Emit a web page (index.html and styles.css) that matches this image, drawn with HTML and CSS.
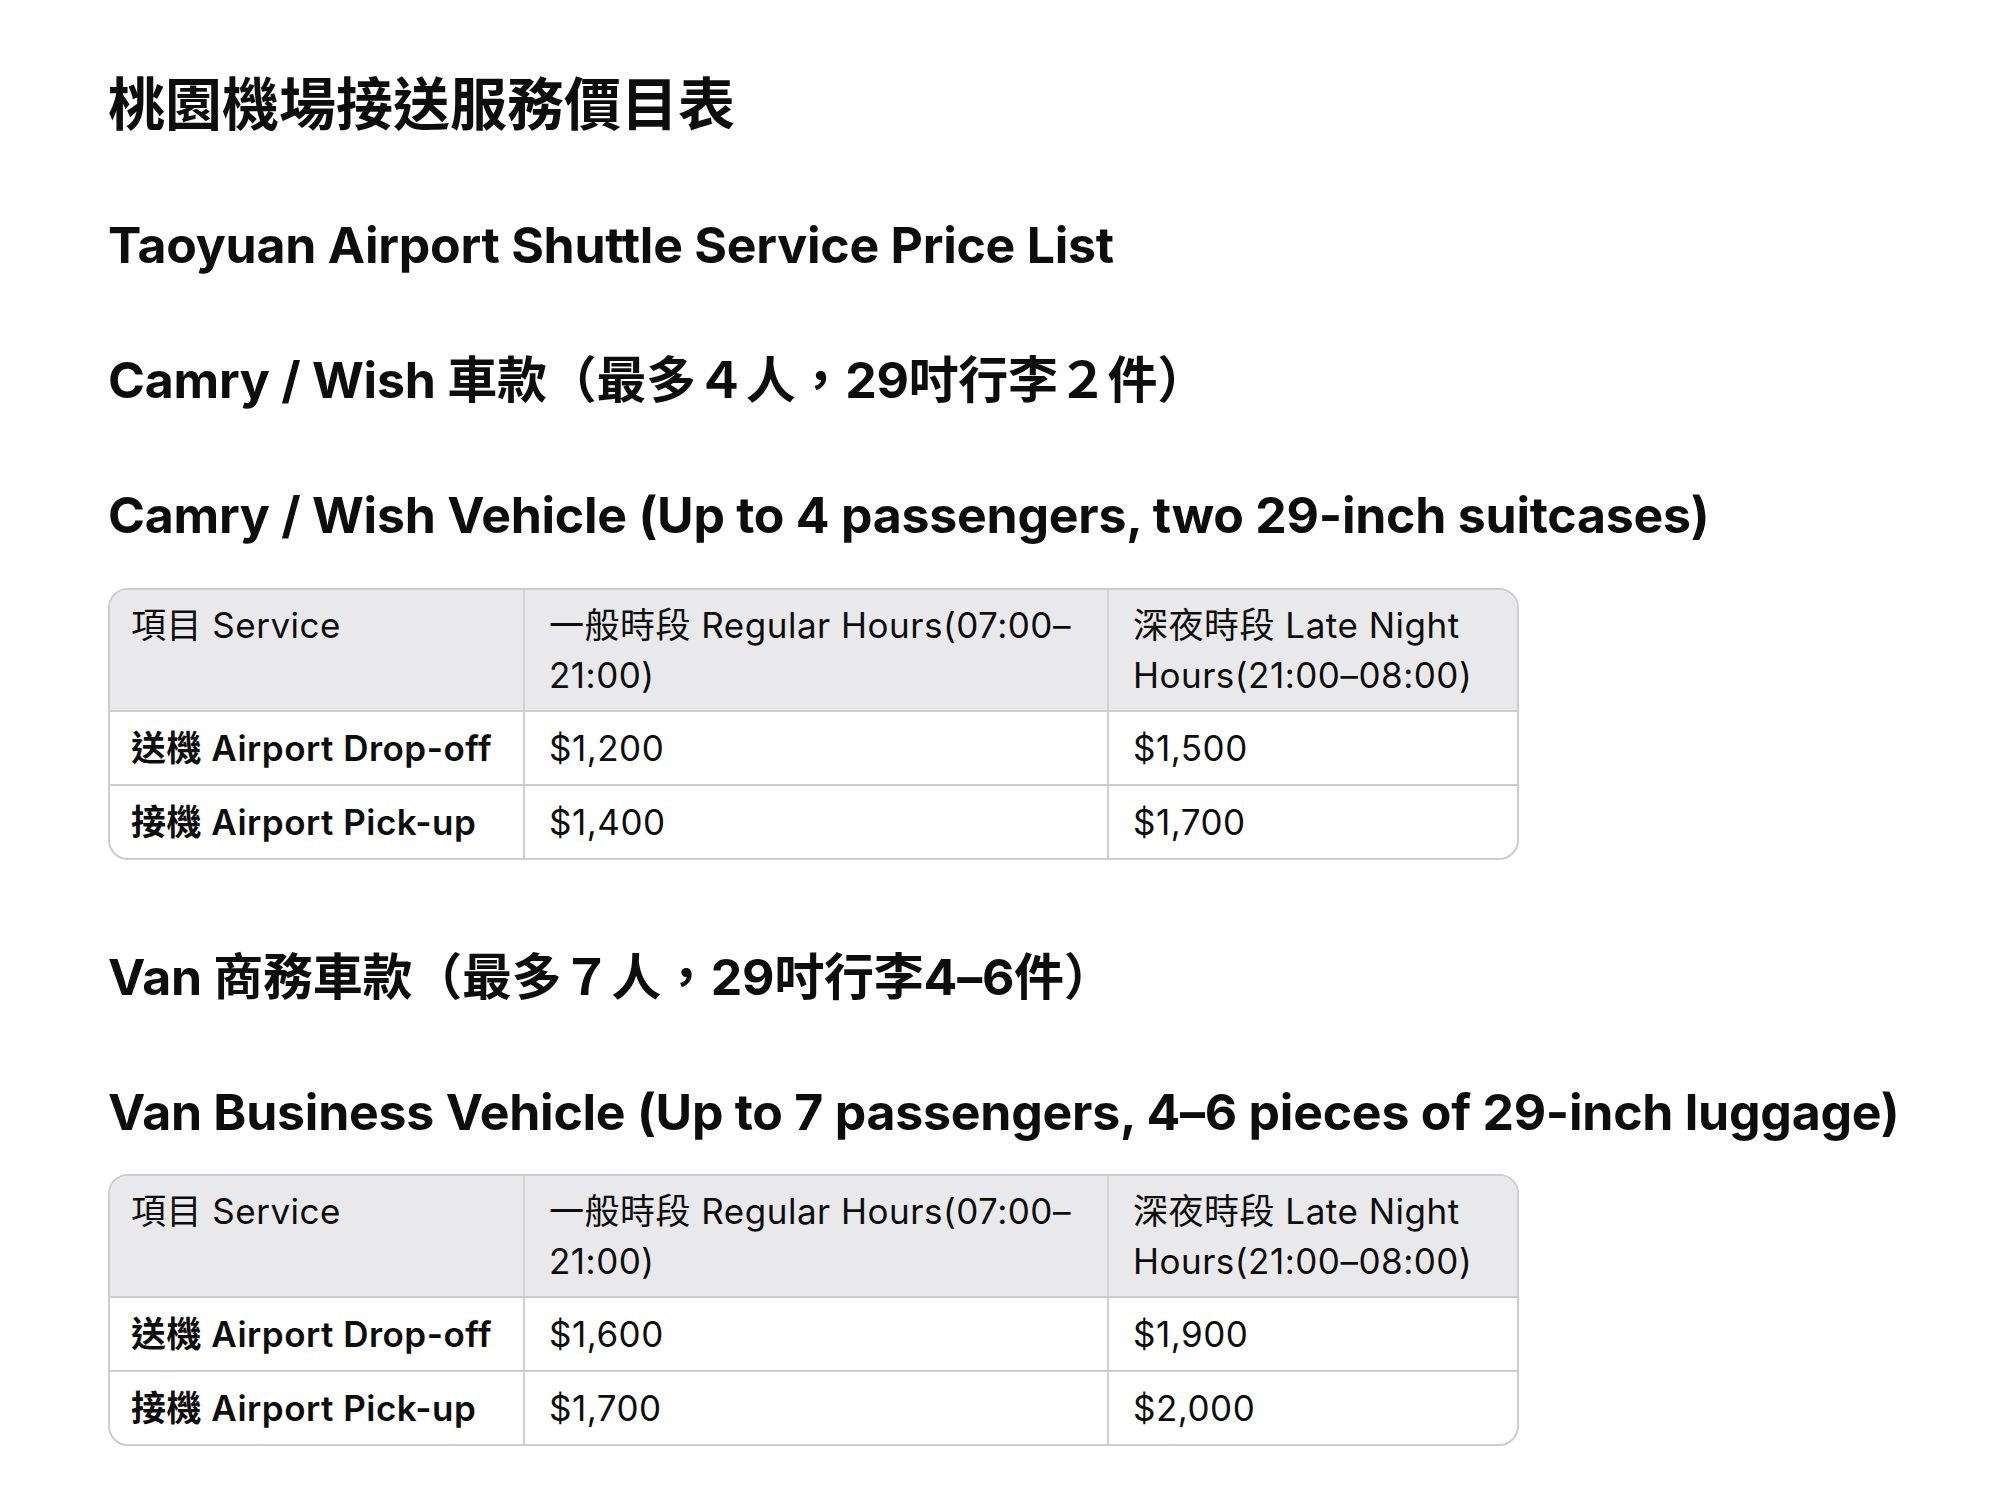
FILE: index.html
```html
<!DOCTYPE html>
<html lang="zh-Hant">
<head>
<meta charset="utf-8">
<title>桃園機場接送服務價目表</title>
<link rel="stylesheet" href="styles.css">
</head>
<body>
<main class="doc">
  <h1 class="doc-title">桃園機場接送服務價目表</h1>
  <h2 class="doc-subtitle">Taoyuan Airport Shuttle Service Price List</h2>

  <section class="vehicle vehicle--first">
    <h3 class="vehicle-title">Camry / Wish 車款（最多４人，29吋行李２件）</h3>
    <h3 class="vehicle-title">Camry / Wish Vehicle (Up to 4 passengers, two 29-inch suitcases)</h3>
    <div class="table-wrap">
      <table class="price-table">
        <colgroup><col class="col-service"><col class="col-regular"><col class="col-night"></colgroup>
        <thead>
          <tr><th>項目 Service</th><th>一般時段 Regular Hours(07:00–<br>21:00)</th><th>深夜時段 Late Night<br>Hours(21:00–08:00)</th></tr>
        </thead>
        <tbody>
          <tr><td class="label">送機 Airport Drop-off</td><td>$1,200</td><td>$1,500</td></tr>
          <tr><td class="label">接機 Airport Pick-up</td><td>$1,400</td><td>$1,700</td></tr>
        </tbody>
      </table>
    </div>
  </section>

  <section class="vehicle vehicle--second">
    <h3 class="vehicle-title">Van 商務車款（最多７人，29吋行李4–6件）</h3>
    <h3 class="vehicle-title">Van Business Vehicle (Up to 7 passengers, 4–6 pieces of 29-inch luggage)</h3>
    <div class="table-wrap">
      <table class="price-table">
        <colgroup><col class="col-service"><col class="col-regular"><col class="col-night"></colgroup>
        <thead>
          <tr><th>項目 Service</th><th>一般時段 Regular Hours(07:00–<br>21:00)</th><th>深夜時段 Late Night<br>Hours(21:00–08:00)</th></tr>
        </thead>
        <tbody>
          <tr><td class="label">送機 Airport Drop-off</td><td>$1,600</td><td>$1,900</td></tr>
          <tr><td class="label">接機 Airport Pick-up</td><td>$1,700</td><td>$2,000</td></tr>
        </tbody>
      </table>
    </div>
  </section>
</main>
</body>
</html>
```

FILE: styles.css
```css
html, body {
  margin: 0;
  padding: 0;
  background: #ffffff;
}

body {
  color: #0d0d0d;
  font-family: Inter, "Noto Sans CJK TC", sans-serif;
}

.doc {
  padding: 71px 0 40px 108px;
}

.doc-title {
  margin: 0;
  font-size: 57px;
  line-height: 68px;
  font-weight: 700;
}

.doc-subtitle,
.vehicle-title {
  margin: 0;
  font-size: 50px;
  line-height: 60px;
  font-weight: 700;
  letter-spacing: -0.25px;
}

.doc-subtitle {
  margin-top: 76px;
}

.vehicle-title {
  margin-top: 75px;
}

.vehicle--second .vehicle-title:first-child {
  margin-top: 87px;
}

.table-wrap {
  width: 1407px;
  margin-top: 43px;
  border: 2px solid #cdcdcd;
  border-radius: 20px;
  overflow: hidden;
}

.vehicle--second .table-wrap {
  margin-top: 32px;
}

.price-table {
  width: 100%;
  border-collapse: collapse;
  table-layout: fixed;
  font-size: 35px;
  line-height: 50px;
  letter-spacing: 0.5px;
}

.col-service { width: 414px; }
.col-regular { width: 584px; }
.col-night { width: auto; }

.price-table th,
.price-table td {
  padding: 11px 24px;
  text-align: left;
  vertical-align: top;
  border-right: 2px solid #d2d2d2;
  border-bottom: 2px solid #cdcdcd;
  white-space: nowrap;
}

.price-table th:first-child,
.price-table td:first-child {
  padding-left: 21px;
}

.price-table th {
  padding-top: 10px;
  padding-bottom: 10px;
  font-weight: 400;
  background: #e9e9eb;
}

.price-table th:last-child,
.price-table td:last-child {
  border-right: none;
}

.price-table tbody tr:last-child td {
  border-bottom: none;
}

.price-table td {
  font-weight: 400;
}

.price-table td.label {
  font-weight: 600;
}
```
